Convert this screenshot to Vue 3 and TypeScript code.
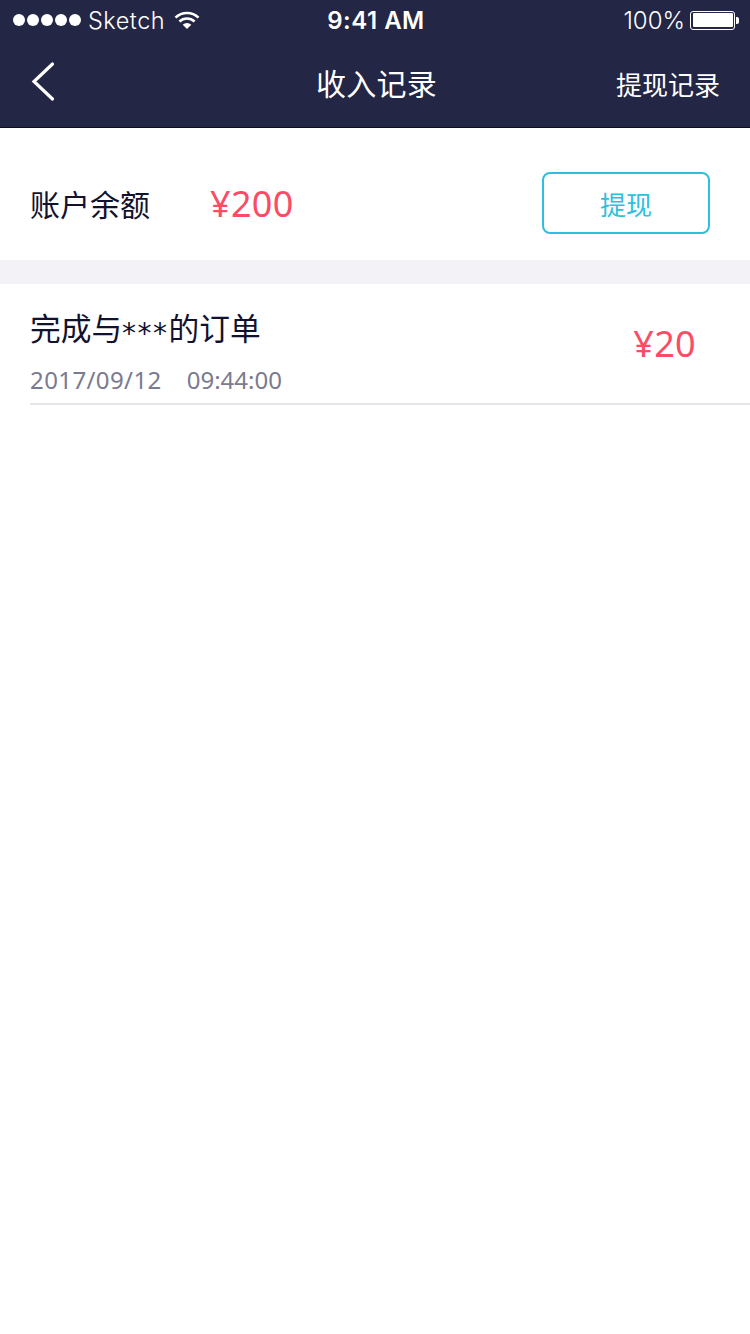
<script setup lang="ts">
const records = [
  { before: '完成与', stars: '***', after: '的订单', date: '2017/09/12', time: '09:44:00', amount: '20' },
]
</script>

<template>
  <div class="page">
    <header class="head">
      <div class="status">
        <div class="status-left">
          <span class="dots"><i v-for="n in 5" :key="n"></i></span>
          <span class="carrier">Sketch</span>
          <svg class="wifi" width="26" height="18" viewBox="0 0 26 18">
            <path d="M13 18 8.700 13.700a6.200 6.200 0 0 1 8.600 0Z" fill="#fff" />
            <path d="M5.400 10.500a11 11 0 0 1 15.200 0" fill="none" stroke="#fff" stroke-width="2.600" />
            <path d="M1.500 6.600a16.500 16.500 0 0 1 23 0" fill="none" stroke="#fff" stroke-width="2.600" />
          </svg>
        </div>
        <div class="clock">9:41 AM</div>
        <div class="status-right">
          <span class="percent">100%</span>
          <span class="battery"><b></b></span>
          <span class="nub"></span>
        </div>
      </div>
      <nav class="nav">
        <svg class="back" width="26" height="42" viewBox="0 0 26 42">
          <path d="M22.500 4 4 21.500l18.500 17.500" fill="none" stroke="#fff" stroke-width="3.200" stroke-linecap="round" />
        </svg>
        <h1 class="title">收入记录</h1>
        <a class="nav-link">提现记录</a>
      </nav>
    </header>

    <section class="balance">
      <span class="balance-label">账户余额</span>
      <span class="money balance-money">¥200</span>
      <button class="withdraw">提现</button>
    </section>

    <div class="sep"></div>

    <ul class="list">
      <li v-for="r in records" :key="r.date + r.time" class="row">
        <div class="row-info">
          <div class="row-title">{{ r.before }}<span class="stars">{{ r.stars }}</span>{{ r.after }}</div>
          <div class="row-date"><span class="date">{{ r.date }}</span><span>{{ r.time }}</span></div>
        </div>
        <span class="money">¥{{ r.amount }}</span>
      </li>
    </ul>
  </div>
</template>

<style scoped>
.page {
  width: 750px;
  min-height: 1334px;
  background: #fff;
  font-family: "Noto Sans CJK SC", "Noto Sans", sans-serif;
  color: #12122e;
}
.head {
  background: #232645;
  border-bottom: 1px solid #0c0c1c;
  height: 128px;
  box-sizing: border-box;
  color: #fff;
}
.status {
  height: 40px;
  padding: 0 11px 0 13px;
  display: flex;
  align-items: center;
  justify-content: space-between;
  font-family: "Inter", "Liberation Sans", sans-serif;
  font-size: 24px;
}
.status-left {
  display: flex;
  align-items: center;
  width: 240px;
}
.dots {
  display: flex;
  gap: 2px;
}
.dots i {
  width: 12px;
  height: 12px;
  border-radius: 50%;
  background: #fff;
}
.carrier {
  margin-left: 7px;
  font-size: 23.500px;
  font-weight: 300;
  letter-spacing: 0.5px;
}
.wifi {
  margin-left: 9px;
}
.clock {
  font-weight: 600;
  font-size: 24px;
  letter-spacing: 0.5px;
}
.status-right {
  width: 240px;
  display: flex;
  align-items: center;
  justify-content: flex-end;
}
.percent {
  font-weight: 300;
  font-size: 24px;
  margin-right: 5px;
}
.battery {
  width: 45px;
  height: 19px;
  box-sizing: border-box;
  border: 1.500px solid #fff;
  border-radius: 3px;
  padding: 1.500px;
  display: block;
}
.battery b {
  display: block;
  height: 100%;
  background: #fff;
  border-radius: 1px;
}
.nub {
  width: 3px;
  height: 7px;
  background: #fff;
  border-radius: 0 2px 2px 0;
  margin-left: 1px;
}
.nav {
  height: 87px;
  display: grid;
  grid-template-columns: 1fr auto 1fr;
  align-items: center;
  padding: 0 30px;
}
.back {
  margin-top: -6px;
}
.title {
  margin: -4px 0 0 3px;
  font-size: 30px;
  font-weight: 400;
  line-height: 40px;
  letter-spacing: 0.2px;
}
.nav-link {
  font-size: 26px;
  line-height: 36px;
  justify-self: end;
}
.balance {
  height: 132px;
  box-sizing: border-box;
  padding: 18px 40px 0 30px;
  display: flex;
  align-items: center;
}
.balance-label {
  font-size: 30px;
  width: 180px;
}
.money {
  color: #fb4b65;
  font-family: "Noto Sans", sans-serif;
  font-size: 36px;
  letter-spacing: 0.3px;
}
.balance-money {
  flex: 1;
}
.withdraw {
  width: 168px;
  height: 62px;
  border: 2px solid #2cc0de;
  border-radius: 8px;
  background: #fff;
  color: #2cc0de;
  font-family: inherit;
  font-size: 26px;
  padding: 0;
}
.sep {
  height: 24px;
  background: #f3f3f7;
}
.list {
  list-style: none;
  margin: 0;
  padding: 0 0 0 30px;
}
.row {
  height: 121px;
  box-sizing: border-box;
  border-bottom: 2px solid #e5e5ea;
  display: flex;
  align-items: center;
  justify-content: space-between;
  padding-right: 54px;
}
.row-info {
  padding-top: 14px;
}
.row-title {
  font-size: 30.700px;
  line-height: 44px;
}
.stars {
  font-family: "DejaVu Sans", sans-serif;
  font-size: 28px;
  letter-spacing: 1.500px;
  vertical-align: -3px;
}
.row-date {
  margin-top: 8px;
  font-family: "Noto Sans", sans-serif;
  font-size: 24px;
  line-height: 32px;
  color: #7a7a90;
  display: flex;
  gap: 25px;
}
.date {
  letter-spacing: 0.4px;
}
</style>
